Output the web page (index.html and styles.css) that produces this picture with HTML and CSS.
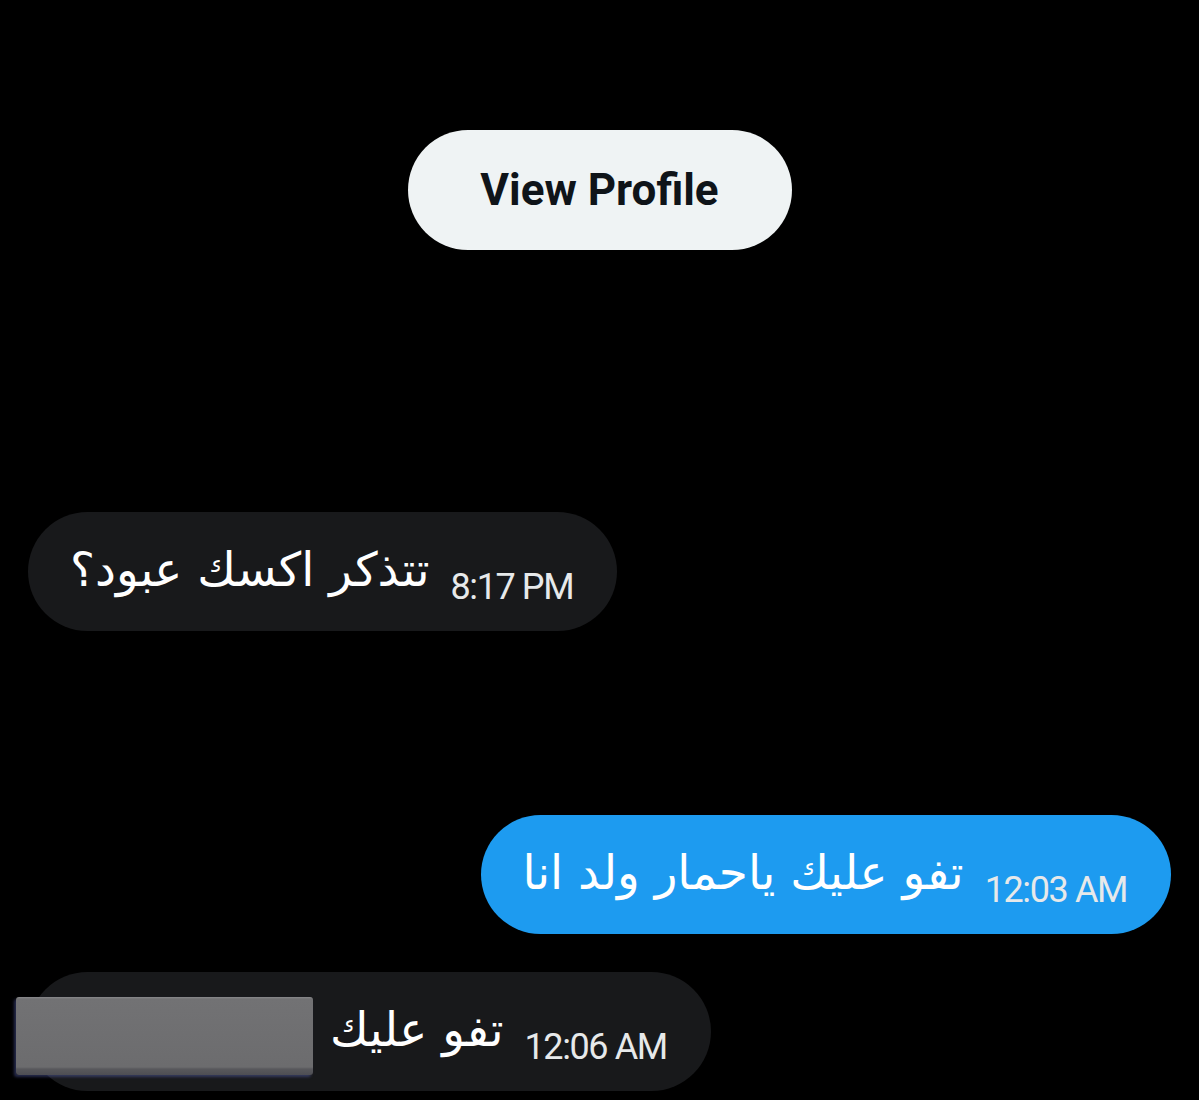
FILE: index.html
```html
<!DOCTYPE html>
<html lang="ar">
<head>
  <meta charset="UTF-8" />
  <meta name="viewport" content="width=device-width, initial-scale=1.0"/>
  <title>Messages</title>
  <link rel="stylesheet" href="styles.css">
</head>
<body>

  <div class="chat">
    <div class="profile-row">
      <button class="profile-btn">View Profile</button>
    </div>

    <div class="msg msg-in first">
      <span class="msg-text" dir="rtl">تتذكر اكسك عبود؟</span>
      <span class="msg-time">8:17 PM</span>
    </div>

    <div class="msg msg-out">
      <span class="msg-text" dir="rtl">تفو عليك ياحمار ولد انا</span>
      <span class="msg-time">12:03 AM</span>
    </div>

    <div class="msg msg-in last">
      <span class="redacted"></span>
      <span class="msg-text" dir="rtl">تفو عليك</span>
      <span class="msg-time">12:06 AM</span>
    </div>
  </div>

</body>
</html>
```

FILE: styles.css
```css
body {
  margin: 0;
  background: #000;
  color: #fff;
  font-family: 'Roboto', sans-serif;
}

.chat {
  display: flex;
  flex-direction: column;
  padding: 130px 28px 0;
  height: 1100px;
  box-sizing: border-box;
  overflow: hidden;
}

.profile-row {
  display: flex;
  justify-content: center;
}

.profile-btn {
  width: 384px;
  height: 120px;
  border: none;
  border-radius: 60px;
  background: #eff3f4;
  color: #0f1419;
  font-family: 'Roboto', sans-serif;
  font-weight: 700;
  font-size: 44px;
  cursor: pointer;
}

.msg {
  display: flex;
  align-items: center;
  gap: 21px;
  height: 119px;
  padding: 0 44px 0 42px;
  border-radius: 60px;
  box-sizing: border-box;
  position: relative;
}

.msg-in {
  align-self: flex-start;
  background: #18191b;
}

.msg-out {
  align-self: flex-end;
  background: #1d9bf0;
  margin-top: 184px;
}

.msg-in.first {
  margin-top: 262px;
}

.msg-in.last {
  margin-top: 38px;
  padding-left: 302px;
}

.msg-text {
  font-family: 'DejaVu Sans', sans-serif;
  font-size: 47px;
  line-height: 1;
  margin-top: -4px;
  color: #fff;
}

.msg-time {
  font-size: 36px;
  letter-spacing: -1.4px;
  color: #e7e9ea;
  margin-top: 30px;
}

.redacted {
  position: absolute;
  left: -12px;
  top: 25px;
  width: 297px;
  height: 78px;
  border-radius: 3px;
  background: linear-gradient(180deg, #8a8a8c 0, #727274 2px, #6c6c6e 70px, #58585c 72px, #4e4e54 100%);
  box-shadow: -2px 2px 3px rgba(110, 120, 220, 0.35);
}
```
